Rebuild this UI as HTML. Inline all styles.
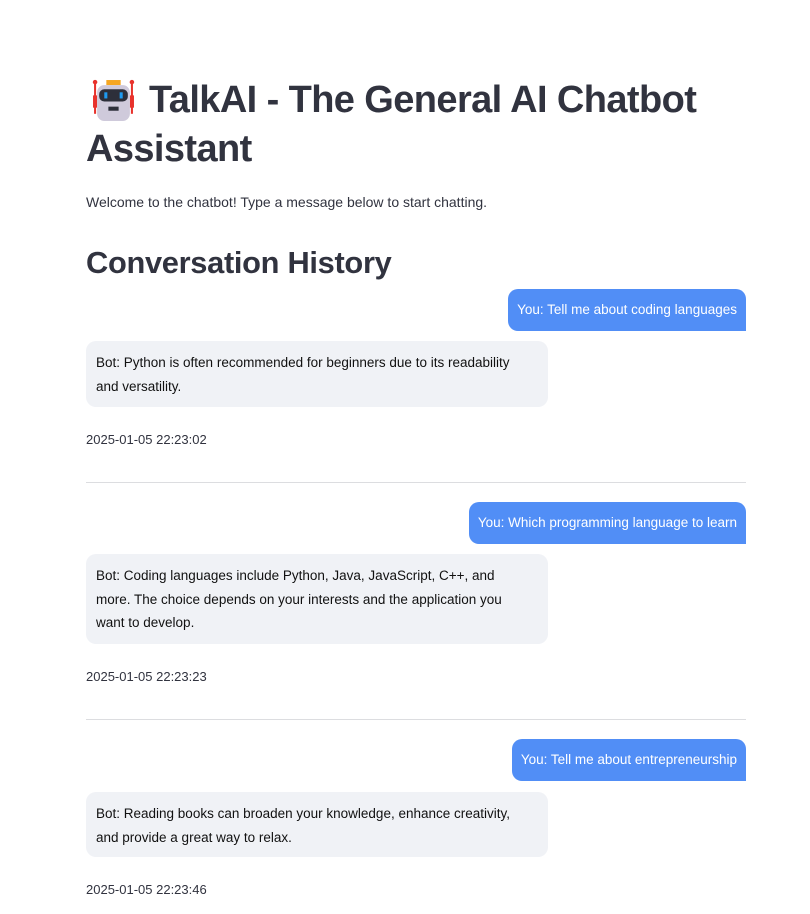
<!DOCTYPE html>
<html><head><meta charset="utf-8"><style>
body{margin:0;width:810px;height:914px;background:#fff;font-family:"Liberation Sans",sans-serif;color:#31333f;position:relative;overflow:hidden}
.a{position:absolute;white-space:nowrap}
.t{font-weight:bold;font-size:38px;letter-spacing:-0.6px;color:#31333f}
.u{position:absolute;right:64px;height:42px;line-height:42px;background:#518ef6;color:#fff;font-size:13.5px;padding:0 9px;border-radius:10px 10px 0 10px;white-space:nowrap}
.b{position:absolute;left:86px;width:442px;background:#f0f2f6;border-radius:10px;padding:10px;font-size:13.5px;line-height:23.5px;color:#111}
.ts{position:absolute;left:86px;font-size:13px;color:#31333f}
.hr{position:absolute;left:86px;width:660px;height:1px;background:#dcdde0}
</style></head><body>
<svg class="a" style="left:90px;top:79px" width="47" height="43" viewBox="0 0 44 42">
<rect x="15" y="1" width="14" height="5" fill="#f5a623"/>
<line x1="4" y1="3" x2="4" y2="34" stroke="#e8322c" stroke-width="2"/>
<line x1="40" y1="3" x2="40" y2="34" stroke="#e8322c" stroke-width="2"/>
<circle cx="4" cy="3" r="2.2" fill="#e8322c"/><circle cx="40" cy="3" r="2.2" fill="#e8322c"/>
<rect x="2" y="16" width="4" height="12" fill="#e8322c"/><rect x="38" y="16" width="4" height="12" fill="#e8322c"/>
<rect x="6" y="6" width="32" height="35" rx="7" fill="#cfcadb"/>
<rect x="8" y="10" width="28" height="12" rx="5" fill="#2d2f3a"/>
<rect x="13" y="13" width="3" height="6" fill="#1e9af0"/><rect x="28" y="13" width="3" height="6" fill="#1e9af0"/>
<rect x="17" y="27" width="10" height="4" fill="#2d2f3a"/>
</svg>
<div class="a t" style="left:149px;top:79px">TalkAI - The General AI Chatbot</div>
<div class="a t" style="left:86px;top:128px">Assistant</div>
<div class="a" style="left:86px;top:194px;font-size:14px">Welcome to the chatbot! Type a message below to start chatting.</div>
<div class="a" style="left:86px;top:245px;font-size:30.8px;font-weight:bold;letter-spacing:-0.3px">Conversation History</div>

<div class="u" style="top:289px">You: Tell me about coding languages</div>
<div class="b" style="top:341px;height:46px">Bot: Python is often recommended for beginners due to its readability<br>and versatility.</div>
<div class="ts" style="top:432px">2025-01-05 22:23:02</div>
<div class="hr" style="top:482px"></div>

<div class="u" style="top:502px">You: Which programming language to learn</div>
<div class="b" style="top:554px;height:70px">Bot: Coding languages include Python, Java, JavaScript, C++, and<br>more. The choice depends on your interests and the application you<br>want to develop.</div>
<div class="ts" style="top:669px">2025-01-05 22:23:23</div>
<div class="hr" style="top:719px"></div>

<div class="u" style="top:739px">You: Tell me about entrepreneurship</div>
<div class="b" style="top:792px;height:45px">Bot: Reading books can broaden your knowledge, enhance creativity,<br>and provide a great way to relax.</div>
<div class="ts" style="top:882px">2025-01-05 22:23:46</div>
</body></html>
